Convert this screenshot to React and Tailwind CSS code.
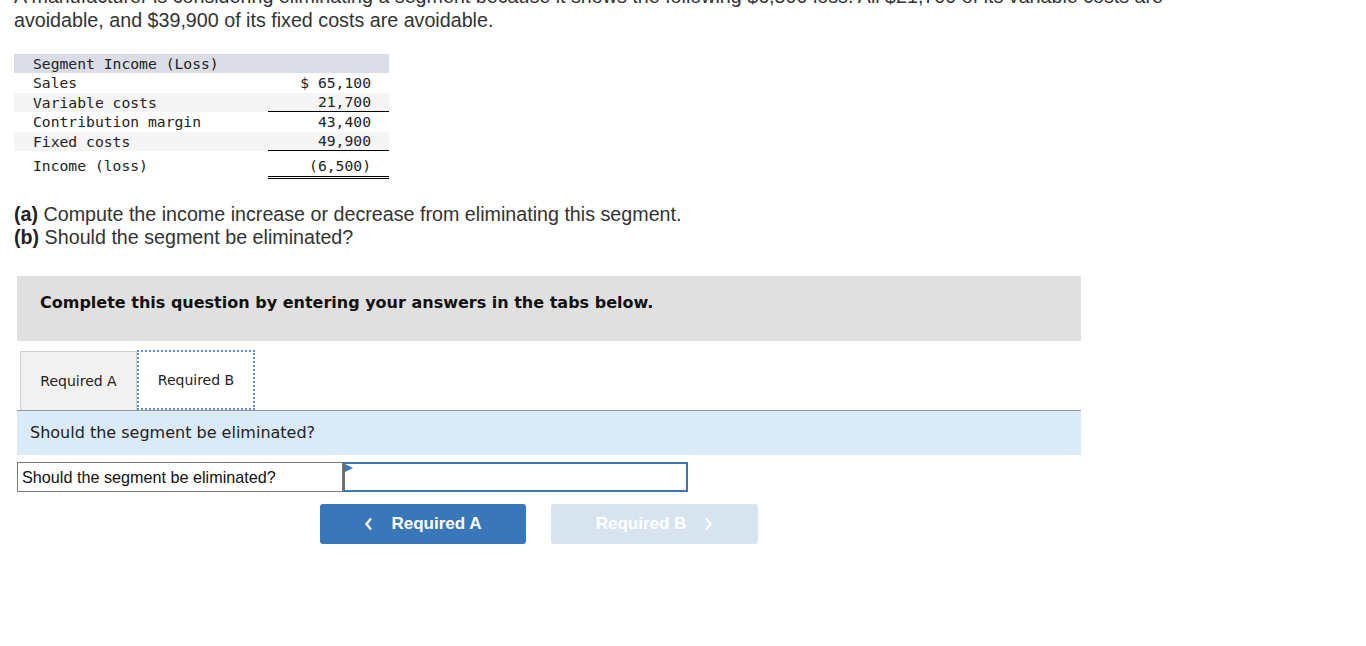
import React from 'react'

const rows = [
  { label: 'Sales', value: '$ 65,100', stripe: false, line: '' },
  { label: 'Variable costs', value: '21,700', stripe: true, line: 'single' },
  { label: 'Contribution margin', value: '43,400', stripe: false, line: '' },
  { label: 'Fixed costs', value: '49,900', stripe: true, line: 'single' },
  { label: 'Income (loss)', value: '(6,500)', stripe: false, line: 'double' },
]

const mono = { fontFamily: '"DejaVu Sans Mono", Consolas, monospace' }
const arial = { fontFamily: '"Liberation Sans", Arial, sans-serif' }

export default function App() {
  return (
    <div className="h-[646px] overflow-hidden bg-white text-[#333]" style={arial}>
      <p className="mt-[-16px] pl-[14px] text-[19.7px] leading-[24px] whitespace-nowrap">
        A manufacturer is considering eliminating a segment because it shows the following $6,500 loss. All $21,700 of its variable costs are
        <br />
        avoidable, and $39,900 of its fixed costs are avoidable.
      </p>

      {/* segment table */}
      <div className="ml-[14px] mt-[22px] w-[375px] text-[14.7px] leading-[19px] text-[#222]" style={mono}>
        <div className="h-[19px] bg-[#dadde5] pl-[19px] leading-[20px]">Segment Income (Loss)</div>
        {rows.map((r) => (
          <div
            key={r.label}
            className={'flex ' + (r.stripe ? 'bg-[#f5f5f5] ' : 'bg-white ') + (r.line === 'double' ? 'h-[28px]' : 'h-[19.5px]')}
          >
            <div className={'flex-1 pl-[19px] ' + (r.line === 'double' ? 'pt-[5px]' : 'flex items-center')}>{r.label}</div>
            <div
              className={
                'w-[121px] text-right pr-[18px] ' +
                (r.line === 'double' ? 'pt-[5px] border-b-[3px] border-double border-black' : 'flex items-center justify-end') +
                (r.line === 'single' ? ' border-b border-black' : '')
              }
            >
              {r.value}
            </div>
          </div>
        ))}
      </div>

      <div className="mt-[24px] pl-[14px] text-[19.7px] leading-[23px] text-[#333]">
        <p><b className="text-[#222]">(a)</b> Compute the income increase or decrease from eliminating this segment.</p>
        <p><b className="text-[#222]">(b)</b> Should the segment be eliminated?</p>
      </div>

      <div className="ml-[17px] mt-[27px] w-[1064px]" style={{ fontFamily: 'Verdana, "DejaVu Sans", sans-serif' }}>
        <div className="h-[65px] bg-[#e0e0e0] pl-[23px] pt-[15px]">
          <span className="text-[16px] leading-[20px] font-bold text-[#111]">Complete this question by entering your answers in the tabs below.</span>
        </div>

        {/* tabs */}
        <div className="mt-[9px] flex items-end pl-[3px] border-b border-[#999]">
          <div className="h-[59px] w-[117px] bg-[#f2f2f2] border border-b-0 border-[#cfcfcf] flex items-center justify-center text-[14px] text-[#222]">
            Required A
          </div>
          <div className="h-[60px] w-[118px] bg-white border-2 border-dotted border-[#5d8fc8] flex items-center justify-center text-[14px] text-[#222]">
            Required B
          </div>
        </div>

        <div className="h-[44px] bg-[#dbeaf8] pl-[13px] flex items-center text-[16px] text-[#222]">
          Should the segment be eliminated?
        </div>

        <div className="mt-[7px] flex h-[30px]">
          <div className="w-[326px] border border-[#7a7a7a] flex items-center pl-[4px] text-[16.2px] text-[#111]" style={arial}>
            Should the segment be eliminated?
          </div>
          <div className="relative w-[345px] border-2 border-[#3c74b4] border-l-[#6d6d6d]">
            <svg className="absolute left-0 top-0" width="8" height="10" viewBox="0 0 8 10">
              <path d="M0 0 L8 4 L0 8 Z" fill="#3a78c0" />
            </svg>
          </div>
        </div>

        <div className="mt-[12px] flex gap-[25px] pl-[303px]" style={arial}>
          <button className="h-[40px] w-[206px] rounded-[3px] bg-[#3a77b9] text-white text-[17px] font-bold flex items-center justify-center gap-[18px]">
            <svg width="9" height="14" viewBox="0 0 9 14"><path d="M7 1.5 L2.5 7 L7 12.5" stroke="white" strokeWidth="2.4" fill="none" /></svg>
            <span>Required A</span>
          </button>
          <button className="h-[40px] w-[207px] rounded-[3px] bg-[#d8e3f0] text-white text-[17px] font-bold flex items-center justify-center gap-[18px]">
            <span>Required B</span>
            <svg width="9" height="14" viewBox="0 0 9 14"><path d="M2 1.5 L6.5 7 L2 12.5" stroke="white" strokeWidth="2.4" fill="none" /></svg>
          </button>
        </div>
      </div>
    </div>
  )
}
